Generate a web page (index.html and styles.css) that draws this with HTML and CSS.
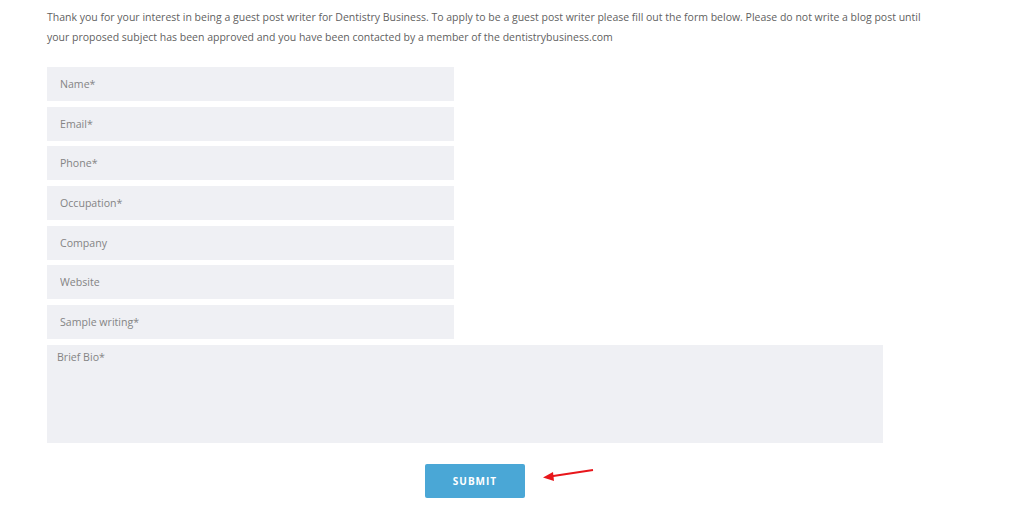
FILE: index.html
```html
<!DOCTYPE html>
<html lang="en">
<head>
    <meta charset="UTF-8">
    <meta name="viewport" content="width=device-width, initial-scale=1.0">
    <link rel="stylesheet" href="styles.css">
    <title>Guest Post Writer</title>
</head>
<body>
    <div class="content">
        <p class="intro">Thank you for your interest in being a guest post writer for Dentistry Business. To apply to be a guest post writer please fill out the form below. Please do not write a blog post until your proposed subject has been approved and you have been contacted by a member of the dentistrybusiness.com</p>
        <form class="guest-form">
            <input type="text" placeholder="Name*">
            <input type="email" placeholder="Email*">
            <input type="text" placeholder="Phone*">
            <input type="text" placeholder="Occupation*">
            <input type="text" placeholder="Company">
            <input type="text" placeholder="Website">
            <input type="text" placeholder="Sample writing*">
            <textarea placeholder="Brief Bio*"></textarea>
            <div class="submit-row">
                <button type="button" class="submit">Submit</button>
                <svg class="arrow" width="60" height="16" viewBox="0 0 60 16">
                    <line x1="51" y1="2" x2="8" y2="8.5" stroke="#e8161b" stroke-width="2"/>
                    <polygon points="1,9.5 11,4 12,13" fill="#e8161b"/>
                </svg>
            </div>
        </form>
    </div>
</body>
</html>
```

FILE: styles.css
```css
body {
    font-family: 'Open Sans', sans-serif;
    background-color: #fff;
    margin: 0;
}

.content {
    padding: 7px 47px 0 47px;
}

.intro {
    margin: 0 0 20px 0;
    font-size: 10.5px;
    line-height: 20px;
    color: #5f5f5f;
    max-width: 890px;
}

.guest-form {
    display: flex;
    flex-direction: column;
    align-items: flex-start;
    gap: 5.7px;
}

.guest-form input,
.guest-form textarea {
    box-sizing: border-box;
    border: none;
    border-radius: 0;
    background-color: #eff0f4;
    font-family: 'Open Sans', sans-serif;
    font-size: 10.6px;
    color: #666;
    outline: none;
}

.guest-form input {
    width: 407px;
    height: 34px;
    padding: 0 13px;
}

.guest-form textarea {
    width: 836px;
    height: 98px;
    padding: 5px 10px;
    resize: none;
}

.guest-form ::placeholder {
    color: #848484;
}

.submit-row {
    position: relative;
    width: 836px;
    display: flex;
    justify-content: center;
    box-sizing: border-box;
    padding-left: 20px;
    margin-top: 15px;
}

.submit {
    width: 100px;
    height: 34px;
    border: none;
    border-radius: 2px;
    background-color: #4aa7d6;
    color: #fff;
    font-family: 'Open Sans', sans-serif;
    font-weight: 700;
    font-size: 10px;
    letter-spacing: 1px;
    text-transform: uppercase;
    cursor: pointer;
}

.arrow {
    position: absolute;
    left: 495px;
    top: 4px;
}
```
